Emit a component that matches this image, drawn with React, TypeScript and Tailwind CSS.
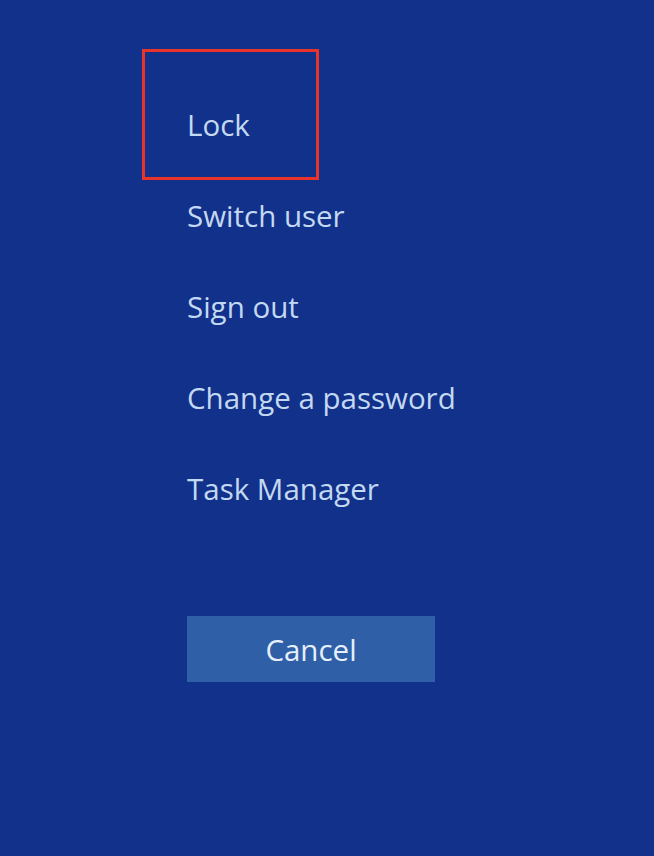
export default function App() {
  const items = ["Switch user", "Sign out", "Change a password", "Task Manager"];
  return (
    <div
      className="w-[654px] h-[856px] bg-[#12318a] text-[#c3d9f2] overflow-hidden"
      style={{ fontFamily: '"Open Sans", "Noto Sans", sans-serif' }}
    >
      <div className="pt-[49px] pl-[142px]">
        <div className="w-[177px] h-[131px] border-[3px] border-[#e8342b] pl-[42px] pt-[53px]">
          <div className="text-[29.5px] leading-[40px]">Lock</div>
        </div>
        <div className="pl-[45px] mt-[16px] flex flex-col gap-[51px]">
          {items.map((t) => (
            <div key={t} className="text-[29.5px] leading-[40px]">
              {t}
            </div>
          ))}
        </div>
        <div className="pl-[45px] mt-[107px]">
          <button className="w-[248px] h-[66px] bg-[#2f5fa6] text-[#e6effa] text-[29.5px] leading-[40px] flex items-center justify-center pt-[2px]">
            Cancel
          </button>
        </div>
      </div>
    </div>
  );
}
